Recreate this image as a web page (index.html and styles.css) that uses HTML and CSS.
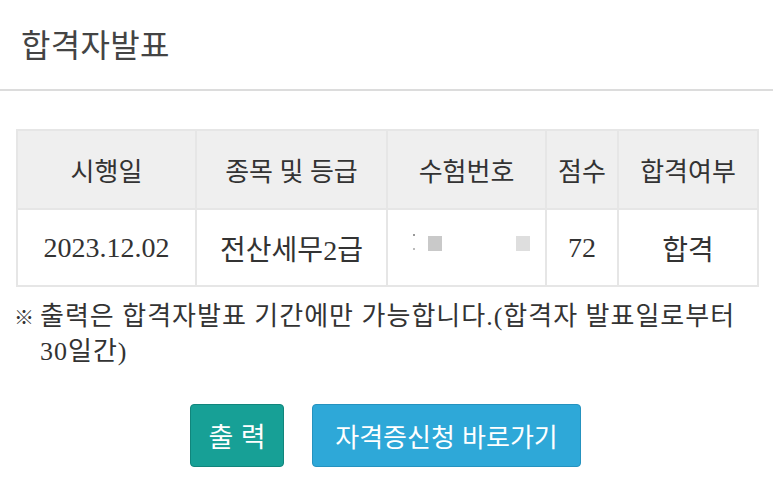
FILE: index.html
```html
<!DOCTYPE html>
<html lang="ko">
<head>
<meta charset="utf-8">
<link rel="stylesheet" href="styles.css">
</head>
<body>
<div class="page">
  <header class="head">
    <h1 class="title">합격자발표</h1>
  </header>
  <section class="content">
    <table class="result">
      <colgroup>
        <col class="c1"><col class="c2"><col class="c3"><col class="c4"><col class="c5">
      </colgroup>
      <thead>
        <tr><th>시행일</th><th>종목 및 등급</th><th>수험번호</th><th>점수</th><th>합격여부</th></tr>
      </thead>
      <tbody>
        <tr>
          <td>2023.12.02</td>
          <td>전산세무2급</td>
          <td class="masked"><span class="dots"></span><span class="sq sq1"></span><span class="sq sq2"></span></td>
          <td>72</td>
          <td>합격</td>
        </tr>
      </tbody>
    </table>
    <p class="note"><span class="mark">※</span><span class="note-text">출력은 합격자발표 기간에만 가능합니다.(합격자 발표일로부터 30일간)</span></p>
    <div class="actions">
      <button class="btn btn-print">출 력</button>
      <button class="btn btn-link">자격증신청 바로가기</button>
    </div>
  </section>
</div>
</body>
</html>
```
FILE: styles.css
```css
html, body {
  margin: 0;
  padding: 0;
  background: #fff;
}
.page {
  width: 773px;
  font-family: "Liberation Serif", "Noto Sans CJK KR", serif;
  color: #333;
}
.head {
  border-bottom: 2px solid #dcdcdc;
  display: flex;
  align-items: center;
  padding-left: 21px;
  box-sizing: border-box;
  height: 91px;
}
.title {
  margin: 0;
  font-family: "Noto Sans CJK KR", sans-serif;
  font-weight: 400;
  font-size: 32px;
  color: #444;
  letter-spacing: 0.3px;
  padding-bottom: 3px;
}
.content {
  padding: 38px 16px 0 16px;
}
.result {
  width: 741px;
  border-collapse: collapse;
  table-layout: fixed;
  border: 2px solid #e6e6e6;
}
.c1 { width: 179px; }
.c2 { width: 191px; }
.c3 { width: 159px; }
.c4 { width: 72px; }
.c5 { width: 140px; }
.result th, .result td {
  border: 2px solid #e6e6e6;
  text-align: center;
  font-weight: 400;
  font-size: 26px;
  color: #333;
  padding: 0;
}
.result th {
  background: #efefef;
  height: 77px;
}
.result td {
  height: 75px;
  font-size: 28px;
}
.masked {
  position: relative;
}
.sq {
  position: absolute;
  top: 26px;
  width: 14px;
  height: 15px;
}
.sq1 { left: 40px; background: #c9c9c9; }
.sq2 { left: 128px; background: #dedede; }
.dots {
  position: absolute;
  left: 25px;
  top: 24px;
  width: 2px;
  height: 18px;
  background: linear-gradient(#999 0 2px, transparent 2px 14px, #bbb 14px 16px, transparent 16px);
}
.note {
  margin: 12px 0 0 -2px;
  display: flex;
  font-size: 26px;
  line-height: 35px;
  color: #333;
}
.mark {
  width: 26px;
  flex: none;
  font-family: "Noto Sans CJK KR", sans-serif;
  font-size: 20px;
  font-weight: 700;
}
.note-text {
  letter-spacing: 1px;
  word-break: keep-all;
}
.actions {
  display: flex;
  justify-content: center;
  gap: 28px;
  margin-top: 35px;
  padding-right: 2px;
}
.btn {
  height: 63px;
  border-radius: 4px;
  font-family: "Noto Sans CJK KR", sans-serif;
  font-size: 26px;
  color: #fff;
  padding: 0 12px;
  cursor: pointer;
}
.btn-print {
  width: 94px;
  background: #17a096;
  border: 1px solid #11857c;
  font-size: 27px;
}
.btn-link {
  width: 269px;
  background: #2ea8d8;
  border: 1px solid #2592bf;
}
```
